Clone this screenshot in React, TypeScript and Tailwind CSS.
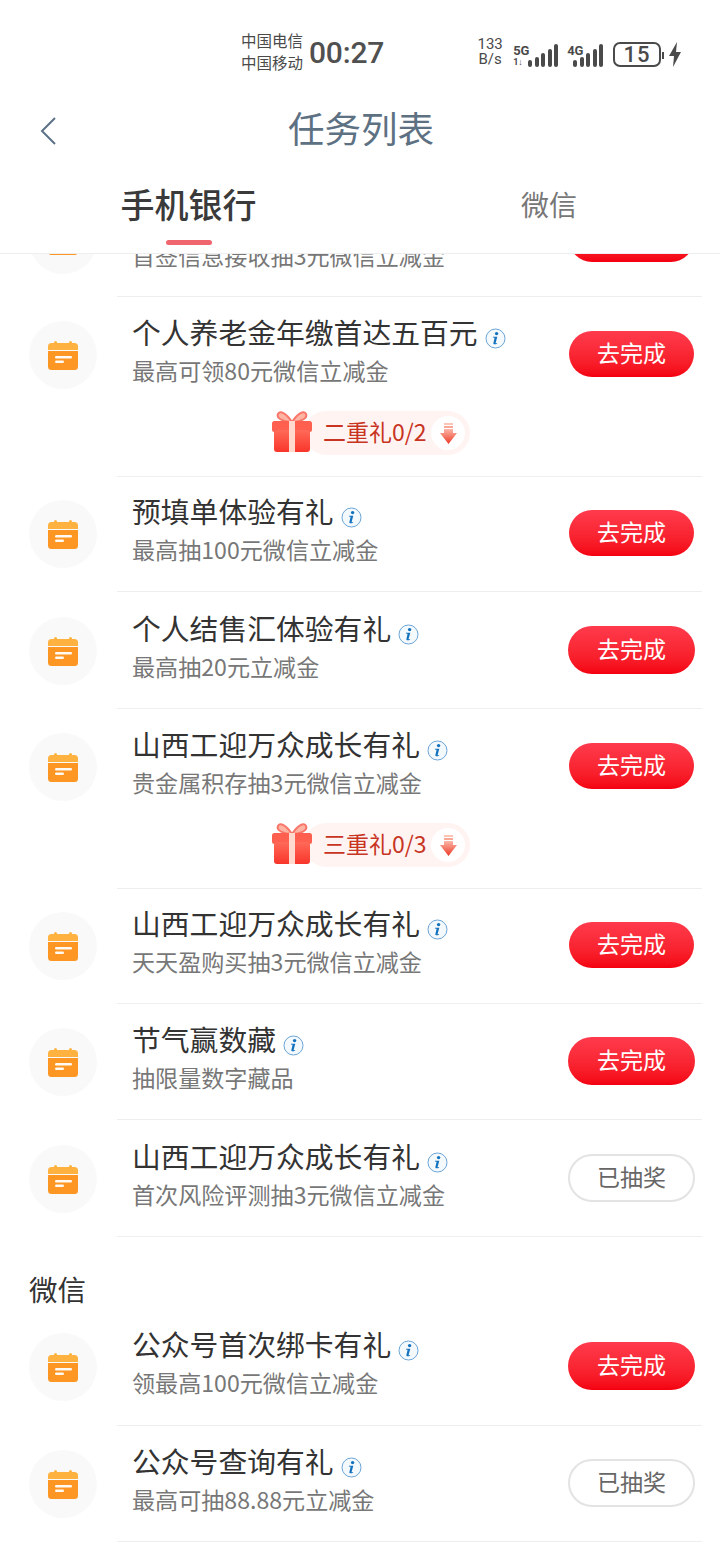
const cjk = "font-['Noto_Sans_CJK_SC','Noto_Sans',sans-serif]";

type Task = {
  title: string;
  sub: string;
  done?: boolean;
  big?: boolean;
  h: number;
  dy?: number;
  gift?: string;
};

const bankTasks: Task[] = [
  { title: "山西工迎万众成长有礼", sub: "首签信息接收抽3元微信立减金", h: 115 },
  { title: "个人养老金年缴首达五百元", sub: "最高可领80元微信立减金", h: 180, gift: "二重礼0/2" },
  { title: "预填单体验有礼", sub: "最高抽100元微信立减金", h: 115, dy: -1 },
  { title: "个人结售汇体验有礼", sub: "最高抽20元立减金", h: 117, dy: 1, big: true },
  { title: "山西工迎万众成长有礼", sub: "贵金属积存抽3元微信立减金", h: 180, gift: "三重礼0/3" },
  { title: "山西工迎万众成长有礼", sub: "天天盈购买抽3元微信立减金", h: 115, dy: -1 },
  { title: "节气赢数藏", sub: "抽限量数字藏品", h: 116, big: true },
  { title: "山西工迎万众成长有礼", sub: "首次风险评测抽3元微信立减金", h: 117, dy: 1, done: true, big: true },
];

const wechatTasks: Task[] = [
  { title: "公众号首次绑卡有礼", sub: "领最高100元微信立减金", h: 116, dy: -1, big: true },
  { title: "公众号查询有礼", sub: "最高可抽88.88元立减金", h: 116, done: true, big: true },
];

function CalendarIcon() {
  return (
    <svg width="32" height="32" viewBox="0 0 32 32">
      <path
        d="M7 3.500a1.500 1.500 0 0 1 3 0V4h12v-.5a1.500 1.500 0 0 1 3 0V4h2.500A3.500 3.500 0 0 1 31 7.500V11H1V7.500A3.500 3.500 0 0 1 4.500 4H7z"
        fill="#ffb23f"
      />
      <path d="M1 12h30v15.500a3.500 3.500 0 0 1-3.500 3.500h-23A3.500 3.500 0 0 1 1 27.500z" fill="#fd9623" />
      <rect x="8" y="17" width="17" height="2.400" rx="1.200" fill="#fff" opacity="0.95" />
      <rect x="8" y="21.500" width="9" height="2.400" rx="1.200" fill="#fff" opacity="0.95" />
    </svg>
  );
}

function InfoIcon() {
  return (
    <svg width="21" height="21" viewBox="0 0 21 21" className="block shrink-0">
      <circle cx="10.500" cy="10.500" r="9.500" fill="#f4f9fe" stroke="#6ba5d6" strokeWidth="1" />
      <circle cx="11.600" cy="5.600" r="1.700" fill="#1272bd" />
      <path
        d="M8 8.700h4.300l-1.700 6.200c-.1.500.4.500 1.600 0l-.2.900c-1.900.9-4 .8-3.600-.9l1.200-5.100-1.700-.2z"
        fill="#1272bd"
      />
    </svg>
  );
}

function GiftIcon() {
  return (
    <svg width="40" height="42" viewBox="0 0 40 42" className="relative z-10 mb-[3px] shrink-0">
      <defs>
        <linearGradient id="box" x1="0" y1="0" x2="0" y2="1">
          <stop offset="0" stopColor="#ff6a58" />
          <stop offset="1" stopColor="#f9352b" />
        </linearGradient>
      </defs>
      <path d="M20 11C14 2 8-1 6 3c-2 4 5 8 14 8zm0 0c6-9 12-12 14-8 2 4-5 8-14 8z" fill="#ffb3a3" stroke="#f9766a" strokeWidth="2" />
      <rect x="0" y="10" width="40" height="11" rx="2.500" fill="#ff5f4e" />
      <rect x="2" y="19" width="36" height="22" rx="3" fill="url(#box)" />
      <rect x="17" y="10" width="6" height="31" fill="#ffd9cd" />
    </svg>
  );
}

function DownIcon() {
  return (
    <svg width="17" height="21" viewBox="0 0 17 21">
      <defs>
        <linearGradient id="arrow" x1="0" y1="0" x2="0" y2="1">
          <stop offset="0" stopColor="#fbb7a8" />
          <stop offset="1" stopColor="#ee3a26" />
        </linearGradient>
      </defs>
      <rect x="4" y="0" width="9" height="2" fill="#fbc4b7" />
      <rect x="4" y="3" width="9" height="2" fill="#f9a897" />
      <path d="M4 6h9v4h4l-8.500 11L0 10h4z" fill="url(#arrow)" />
    </svg>
  );
}

function Signal() {
  const heights = [7, 10, 14, 18, 23];
  return (
    <div className="flex items-end gap-[2.500px]">
      {heights.map((b, i) => (
        <div key={i} className="w-[4px] rounded-[2px] bg-[#4a4a4a]" style={{ height: b }} />
      ))}
    </div>
  );
}

function StatusBar() {
  return (
    <div className="flex h-[90px] items-start pl-[241px] pt-[29px] text-[#4a4a4a]">
      <div className={`${cjk} w-[68px] text-[15.500px] leading-[22px]`}>
        <div>中国电信</div>
        <div>中国移动</div>
      </div>
      <div className="font-['Roboto',sans-serif] text-[30px] font-medium leading-[48px] tracking-[-0.2px] text-[#505050]">00:27</div>
      <div className="ml-[92px] mt-[8px] flex items-end">
        <div className="w-[28px] text-center font-['Roboto',sans-serif] text-[15px] leading-[15px]">
          <div>133</div>
          <div>B/s</div>
        </div>
        <div className="ml-[9px] flex items-end">
          <div className="w-[15px] font-['Roboto',sans-serif] text-[13px] font-bold leading-[13px]">
            <div className="whitespace-nowrap">5G</div>
            <div className="text-[9px] leading-[10px]">1↓</div>
          </div>
          <Signal />
        </div>
        <div className="ml-[9px] flex items-end">
          <div className="mb-[10px] w-[6px] whitespace-nowrap font-['Roboto',sans-serif] text-[13px] font-bold leading-[13px]">4G</div>
          <Signal />
        </div>
        <div className="ml-[10px] flex h-[25px] w-[48px] items-center justify-center rounded-[7px] border-[2px] border-[#4a4a4a] font-['Roboto',sans-serif] text-[22px] font-medium leading-none tracking-[1px]">
          15
        </div>
        <div className="mb-[8px] ml-[1px] h-[7px] w-[2px] bg-[#4a4a4a]" />
        <svg width="14" height="25" viewBox="0 0 14 25" className="ml-[4px]">
          <path d="M9 0 1 14h5l-1 11 8-15H8z" fill="#4a4a4a" />
        </svg>
      </div>
    </div>
  );
}

function Header() {
  return (
    <div className="border-b border-[#eeeeee] bg-white">
      <StatusBar />
      <div className="flex h-[80px] items-center">
        <svg width="18" height="30" viewBox="0 0 18 30" className="ml-[39px] mt-[2px]">
          <path d="M16 2 3 15l13 13" fill="none" stroke="#5c7186" strokeWidth="2" />
        </svg>
        <div className={`${cjk} ml-[231px] pb-[4px] text-[36.500px] leading-[76px] text-[#5d7183]`}>任务列表</div>
      </div>
      <div className={`${cjk} flex h-[83px] pl-[120px]`}>
        <div className="flex w-[137px] flex-col items-center">
          <div className="mt-[9px] whitespace-nowrap text-[34px] font-medium leading-[50px] text-[#3a3a3a]">手机银行</div>
          <div className="mt-[11px] h-[5px] w-[46px] rounded-full bg-[#f0666f]" />
        </div>
        <div className="ml-[264px] mt-[12px] text-[28px] leading-[44px] text-[#777777]">微信</div>
      </div>
    </div>
  );
}

function TaskRow({ task }: { task: Task }) {
  const btnSize = task.big ? "mr-[7px] h-[48px] w-[127px]" : "mr-[8px] h-[46px] w-[125px]";
  const dy = task.dy ?? 0;
  return (
    <div className="flex pl-[29px] pr-[18px]" style={{ height: task.h }}>
      <div
        className="flex h-[68px] w-[68px] shrink-0 items-center justify-center rounded-full bg-[#f9f9f9]"
        style={{ marginTop: 24 + dy }}
      >
        <CalendarIcon />
      </div>
      <div className="ml-[20px] flex-1 border-b border-[#eeeeee]">
        <div className="flex h-[115px] items-center pl-[15px]" style={{ marginTop: dy }}>
          <div className="min-w-0 flex-1 pb-[8px]">
            <div className="flex items-center gap-[7px]">
              <span className="whitespace-nowrap text-[28.800px] leading-[38px] text-[#333333]">{task.title}</span>
              <span className="mt-[14px] flex"><InfoIcon /></span>
            </div>
            <div className="whitespace-nowrap text-[23.100px] leading-[38px] text-[#777777]">{task.sub}</div>
          </div>
          {task.done ? (
            <div className={`${btnSize} mb-[2px] flex items-center justify-center rounded-full border-[2px] border-[#e3e3e3] bg-white pb-[2px] text-[23px] text-[#666666]`}>
              已抽奖
            </div>
          ) : (
            <div className={`${btnSize} mb-[2px] flex items-center justify-center rounded-full bg-gradient-to-b from-[#ff3a4c] to-[#f4000f] pb-[2px] text-[23px] text-white`}>
              去完成
            </div>
          )}
        </div>
        {task.gift && (
          <div className="ml-[155px] -mt-[1px] flex h-[44px] items-center">
            <GiftIcon />
            <div className="ml-[-8px] flex h-[44px] w-[166px] items-center justify-between rounded-full bg-[#fff4f2] pl-[19px] pr-[5px]">
              <span className="pb-[3px] text-[23px] text-[#c8341f]">{task.gift}</span>
              <span className="flex h-[34px] w-[34px] items-center justify-center rounded-full bg-white"><DownIcon /></span>
            </div>
          </div>
        )}
      </div>
    </div>
  );
}

export default function App() {
  return (
    <div className={`${cjk} h-[1560px] w-[720px] overflow-hidden bg-white`}>
      <Header />
      <div className="h-[1306px] overflow-hidden">
        <div className="-mt-[72px]">
          {bankTasks.map((t, i) => (
            <TaskRow key={i} task={t} />
          ))}
          <div className="flex h-[73px] items-end pl-[29px] text-[28.500px] leading-[43px] text-[#333333]">微信</div>
          {wechatTasks.map((t, i) => (
            <TaskRow key={i} task={t} />
          ))}
        </div>
      </div>
    </div>
  );
}
